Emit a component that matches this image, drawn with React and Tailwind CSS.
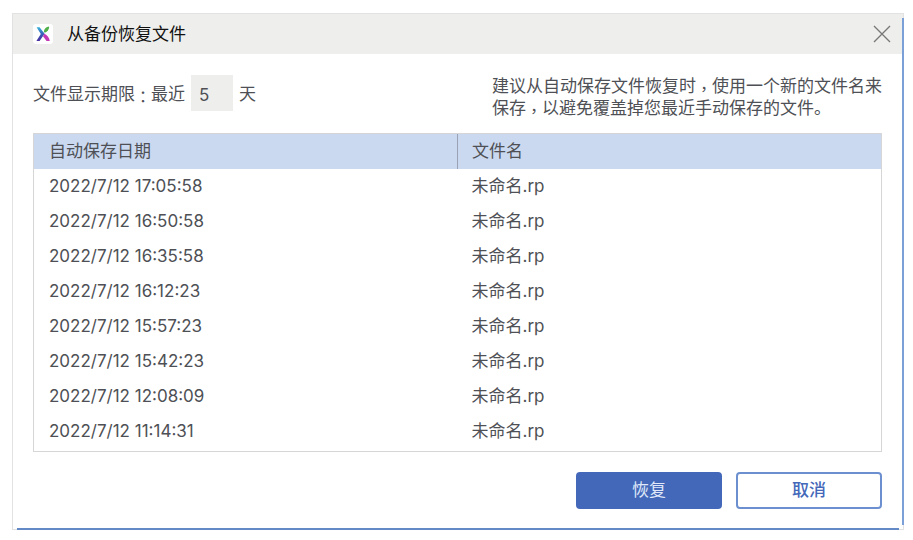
import React, { useState } from "react";

const files = [
  "2022/7/12 17:05:58",
  "2022/7/12 16:50:58",
  "2022/7/12 16:35:58",
  "2022/7/12 16:12:23",
  "2022/7/12 15:57:23",
  "2022/7/12 15:42:23",
  "2022/7/12 12:08:09",
  "2022/7/12 11:14:31",
];

// Full-width punctuation centred in its cell, set slightly low.
function Mark({ children }) {
  return (
    <span className="align-[-3px] font-['Noto_Sans_CJK_TC',sans-serif] text-base leading-none">{children}</span>
  );
}

function Logo() {
  return (
    <svg viewBox="0 0 20 20" className="size-5" aria-hidden="true">
      <defs>
        <linearGradient id="stroke-down" x1="0" y1="0" x2="0" y2="1">
          <stop offset="0" stopColor="#35b3dc" />
          <stop offset="0.5" stopColor="#3a5fb8" />
          <stop offset="1" stopColor="#4a2c9c" />
        </linearGradient>
      </defs>
      <rect width="20" height="20" rx="3" fill="#fff" />
      <path d="M3.6 3.2H6.6L11.6 9.8L6.6 17H3.4L7.8 10Z" fill="url(#stroke-down)" />
      <path d="M10.8 7.6C11.4 4.8 13 3 16.2 2.6C16.2 5.6 14.6 7.8 11.8 8.8Z" fill="#52b04b" />
      <path d="M11.4 9.8C14.4 11.2 16.4 14 16.8 17H13.6L10 12.2Z" fill="#c336b5" />
    </svg>
  );
}

export default function App() {
  const [days, setDays] = useState("5");
  return (
    <main className="min-h-screen bg-white pt-[13px] pr-[9px] pb-2 pl-3 font-[Inter,'Noto_Sans_CJK_SC',sans-serif] text-[17px] text-[#4e5055]">
      <section role="dialog" aria-labelledby="title" className="relative border border-[#e2e2e2] bg-white">
        <header className="flex h-10 items-center bg-[#eeeeec] pr-3 pl-5">
          <Logo />
          <h1 id="title" className="ml-[14px] flex-1 leading-6 text-[#111]">从备份恢复文件</h1>
          <button type="button" aria-label="关闭" className="text-[#777]">
            <svg viewBox="0 0 18 18" className="size-[18px]" fill="none" stroke="currentColor" strokeWidth="1.3">
              <path d="M1 1L17 17M17 1L1 17" />
            </svg>
          </button>
        </header>

        <div className="pr-[21px] pb-5 pl-5">
          <div className="flex h-[65px] items-start justify-between pt-[21px]">
            <div className="flex h-9 items-center whitespace-nowrap">
              <label htmlFor="days" className="pt-1">文件显示期限<Mark>：</Mark>最近</label>
              <input
                id="days"
                value={days}
                onChange={(e) => setDays(e.target.value)}
                className="mx-[6px] h-9 w-[42px] bg-[#eeeeec] pt-1 pl-2 outline-none"
              />
              <span className="pt-1">天</span>
            </div>
            <p className="leading-[22px] whitespace-nowrap">
              建议从自动保存文件恢复时<Mark>，</Mark>使用一个新的文件名来
              <br />
              保存<Mark>，</Mark>以避免覆盖掉您最近手动保存的文件。
            </p>
          </div>

          <div className="mt-[14px] border border-[#d6d6d6] pb-[2px]">
            <table className="w-full table-fixed border-collapse text-left">
              <thead className="bg-[#cbd9f0]">
                <tr className="h-[35px]">
                  <th scope="col" className="w-1/2 border-r border-[#9aa3b5] pl-[15px] font-normal">自动保存日期</th>
                  <th scope="col" className="pl-[14px] font-normal">文件名</th>
                </tr>
              </thead>
              <tbody>
                {files.map((date) => (
                  <tr key={date} className="h-[35px]">
                    <td className="pl-[15px]">{date}</td>
                    <td className="pl-[14px]">未命名.rp</td>
                  </tr>
                ))}
              </tbody>
            </table>
          </div>

          <div className="mt-5 flex justify-end gap-[14px]">
            <button type="button" className="h-[37px] w-[146px] rounded-[4px] bg-[#4468b9] text-[#dfe7f8]">恢复</button>
            <button type="button" className="h-[37px] w-[146px] rounded-[4px] border-2 border-[#6c8fd0] bg-white font-medium text-[#4468b9]">取消</button>
          </div>
        </div>
        <span className="absolute -right-px top-1 bottom-1 w-[2px] bg-[#7ba0d8]" />
        <span className="absolute -bottom-px right-1 left-1 h-[2px] bg-[#6389c6]" />
      </section>
    </main>
  );
}
